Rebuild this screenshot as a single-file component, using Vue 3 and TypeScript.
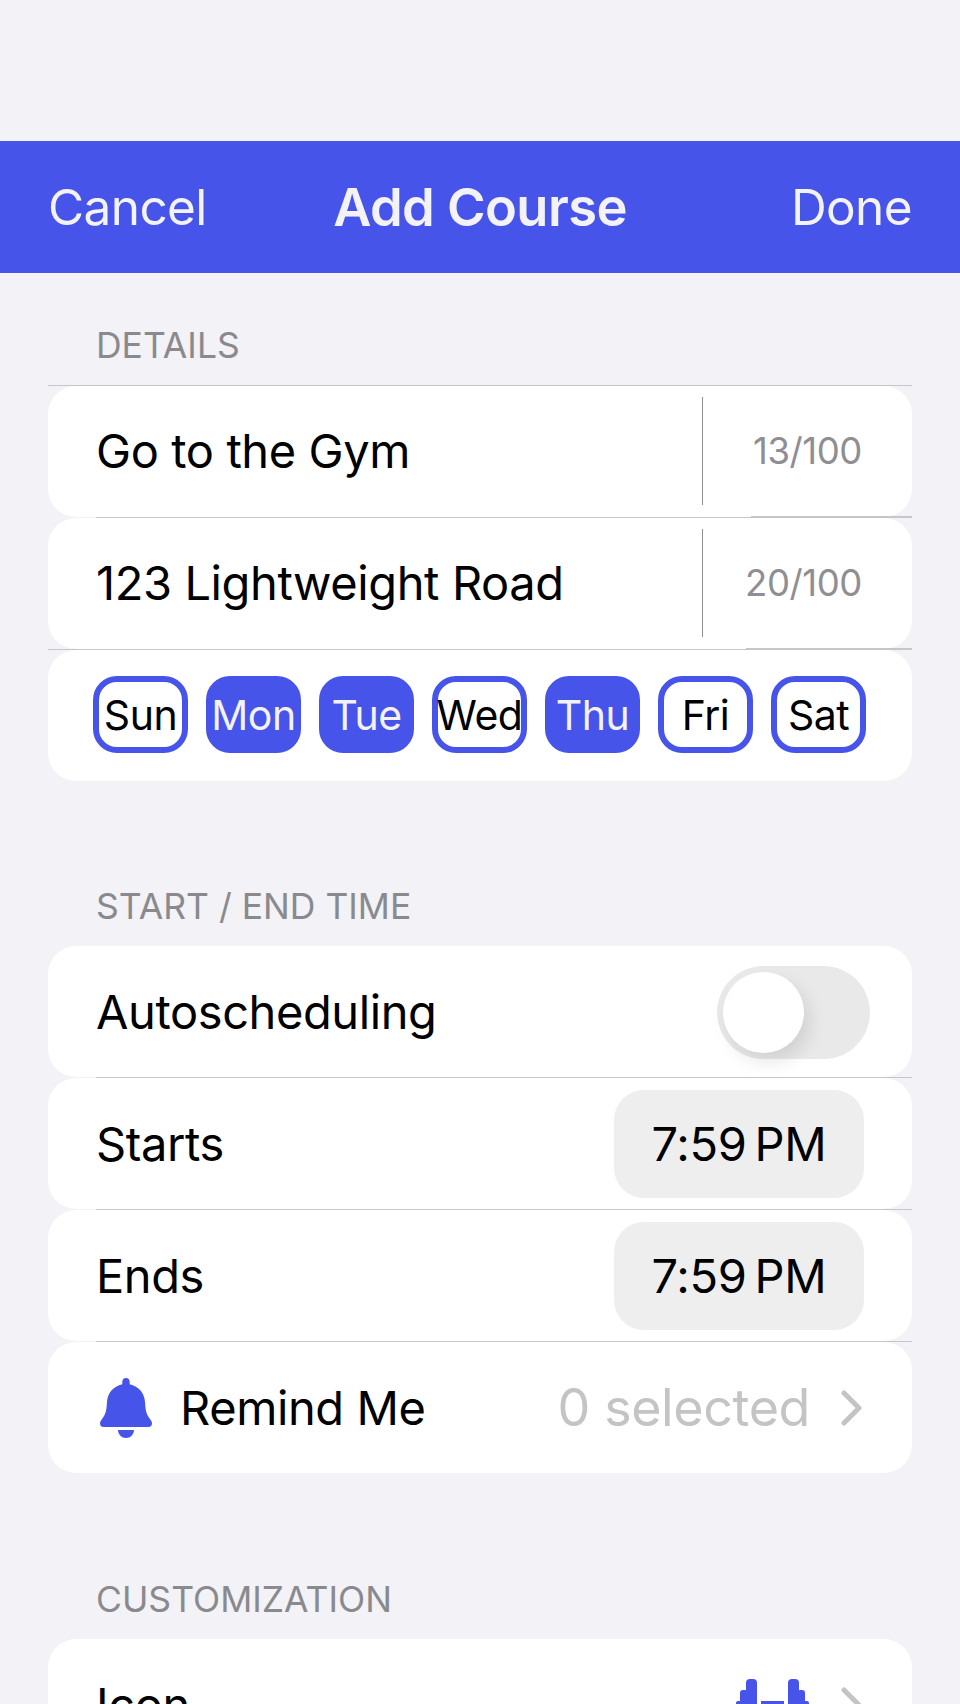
<template>
  <div class="page">
    <header class="nav">
      <span class="nav-btn">Cancel</span>
      <span class="nav-title">Add Course</span>
      <span class="nav-btn done">Done</span>
    </header>

    <div class="section-label first">DETAILS</div>
    <div class="line"></div>
    <div class="row tight">
      <span class="value">Go to the Gym</span>
      <span class="sep"></span>
      <span class="count">13/100</span>
    </div>
    <div class="line split" style="--cut: 655px"><i></i><i></i></div>
    <div class="row tight">
      <span class="value">123 Lightweight Road</span>
      <span class="sep"></span>
      <span class="count">20/100</span>
    </div>
    <div class="line split full" style="--cut: 698px"><i></i><i></i></div>
    <div class="row days">
      <span v-for="d in days" :key="d.name" class="day" :class="{ on: d.on }">{{ d.name }}</span>
    </div>

    <div class="section-label second">START / END TIME</div>
    <div class="row">
      <span class="value">Autoscheduling</span>
      <span class="switch"><span class="knob"></span></span>
    </div>
    <div class="line inset"></div>
    <div class="row">
      <span class="value">Starts</span>
      <span class="time">7:59<span class="pm">PM</span></span>
    </div>
    <div class="line inset"></div>
    <div class="row">
      <span class="value">Ends</span>
      <span class="time">7:59<span class="pm">PM</span></span>
    </div>
    <div class="line inset"></div>
    <div class="row">
      <svg class="bell" viewBox="0 0 52 60" aria-hidden="true">
        <path d="M26 0c2.200 0 3.700 1.500 3.700 3.700v2.600C38.800 8.500 44.500 15 45 24l.5 6c.4 5 2.500 8.500 5.500 12.500.7 1 1 2 1 3 0 2-1.400 3.500-3.500 3.500H3.500C1.400 49 0 47.500 0 45.500c0-1 .3-2 1-3 3-4 5.100-7.500 5.500-12.500l.5-6c.5-9 6.200-15.500 15.300-17.700V3.700C22.300 1.500 23.800 0 26 0z" />
        <path d="M18 52h16c-.3 4.500-3.500 8-8 8s-7.700-3.500-8-8z" />
      </svg>
      <span class="value remind">Remind Me</span>
      <span class="muted">0 selected</span>
      <svg class="chev" viewBox="0 0 22 36" aria-hidden="true"><path d="M3 3l15 15L3 33" /></svg>
    </div>

    <div class="section-label">CUSTOMIZATION</div>
    <div class="row">
      <span class="value">Icon</span>
      <svg class="dumbbell" viewBox="0 0 73 52" aria-hidden="true">
        <rect x="10" y="0" width="11" height="52" rx="4" />
        <rect x="4" y="11" width="8" height="30" rx="3" />
        <rect x="0" y="22" width="6" height="8" rx="2" />
        <rect x="25" y="22" width="23" height="8" />
        <rect x="52" y="0" width="11" height="52" rx="4" />
        <rect x="61" y="11" width="8" height="30" rx="3" />
        <rect x="67" y="22" width="6" height="8" rx="2" />
      </svg>
      <svg class="chev" viewBox="0 0 22 36" aria-hidden="true"><path d="M3 3l15 15L3 33" /></svg>
    </div>
  </div>
</template>

<script setup lang="ts">
interface Day {
  name: string;
  on: boolean;
}

const days: Day[] = [
  { name: "Sun", on: false },
  { name: "Mon", on: true },
  { name: "Tue", on: true },
  { name: "Wed", on: false },
  { name: "Thu", on: true },
  { name: "Fri", on: false },
  { name: "Sat", on: false },
];
</script>

<style>
html,
body {
  margin: 0;
  background: #f2f2f7;
  height: 1704px;
  overflow: hidden;
}
</style>

<style scoped>
.page {
  width: 960px;
  height: 1704px;
  overflow: hidden;
  background: #f2f2f7;
  padding-top: 141px;
  box-sizing: border-box;
  font-family: Inter, "Liberation Sans", sans-serif;
  color: #000;
}

.nav {
  height: 132px;
  background: #4754ea;
  color: #f2f2f7;
  display: grid;
  grid-template-columns: 1fr auto 1fr;
  align-items: center;
  padding: 0 48px;
}

.nav-btn {
  font-size: 49.5px;
  letter-spacing: -0.6px;
}

.nav-btn.done {
  text-align: right;
}

.nav-title {
  font-size: 52.5px;
  font-weight: 600;
  letter-spacing: -0.6px;
}

.section-label {
  font-size: 35.5px;
  line-height: 40px;
  color: #8a8a8e;
  margin: 107px 0 19px 96px;
}

.section-label.first {
  margin-top: 53px;
  margin-bottom: 19px;
}

.section-label.second {
  margin-top: 106px;
}

.line {
  height: 1px;
  margin-left: 48px;
  width: 864px;
  background: #c6c6c8;
}

.line.inset {
  margin-left: 96px;
  width: 816px;
}

.line.split {
  background: none;
  margin-left: 96px;
  width: 816px;
  display: flex;
  height: 1px;
}

.line.split.full {
  margin-left: 48px;
  width: 864px;
}

.line.split i {
  display: block;
  height: 1px;
  background: #c6c6c8;
}

.line.split i:first-child {
  width: var(--cut);
}

.line.split i:last-child {
  flex: 1;
  height: 2px;
  margin-top: -1px;
}

.row {
  height: 131px;
  margin: 0 48px;
  background: #fff;
  border-radius: 28px;
  display: flex;
  align-items: center;
  padding: 0 48px;
  box-sizing: border-box;
}

.row.tight {
  padding-bottom: 2px;
}

.value {
  font-size: 47px;
  letter-spacing: -0.4px;
  flex: 1;
  white-space: nowrap;
}

.sep {
  width: 1px;
  height: 108px;
  background: #8e8e90;
  margin-right: 34px;
}

.count {
  font-size: 36.5px;
  color: #8e8e93;
  width: 125px;
  margin-right: 2px;
  text-align: right;
  letter-spacing: -0.4px;
  white-space: nowrap;
}

.days {
  justify-content: center;
  gap: 18px;
  padding: 0 1px 2px 0;
}

.day {
  width: 95px;
  height: 77px;
  box-sizing: border-box;
  border: 6px solid #4754ea;
  border-radius: 24px;
  font-size: 41px;
  letter-spacing: -0.5px;
  display: flex;
  align-items: center;
  justify-content: center;
  white-space: nowrap;
}

.day.on {
  background: #4754ea;
  color: #f2f2f7;
}

.switch {
  width: 153px;
  height: 93px;
  border-radius: 47px;
  background: #e9e9ea;
  margin: 2px -6px 0 0;
  padding: 6px;
  box-sizing: border-box;
}

.knob {
  display: block;
  width: 81px;
  height: 81px;
  border-radius: 50%;
  background: #fff;
  box-shadow: 6px 9px 18px rgba(0, 0, 0, 0.1);
}

.time {
  width: 250px;
  height: 108px;
  border-radius: 30px;
  background: #eeeeef;
  font-size: 47px;
  letter-spacing: -0.3px;
  display: flex;
  align-items: center;
  justify-content: center;
}

.pm {
  margin-left: 8px;
}

.bell {
  width: 52px;
  height: 60px;
  margin: 0 28px 0 4px;
  fill: #4754ea;
}

.muted {
  font-size: 52px;
  color: #c4c4c6;
  letter-spacing: -0.4px;
  margin-right: 31px;
}

.chev {
  width: 22px;
  height: 36px;
  margin-right: 1px;
  fill: none;
  stroke: #c4c4c6;
  stroke-width: 5;
  stroke-linecap: round;
  stroke-linejoin: round;
}

.dumbbell {
  width: 73px;
  height: 52px;
  margin-right: 32px;
  fill: #4754ea;
}
</style>
